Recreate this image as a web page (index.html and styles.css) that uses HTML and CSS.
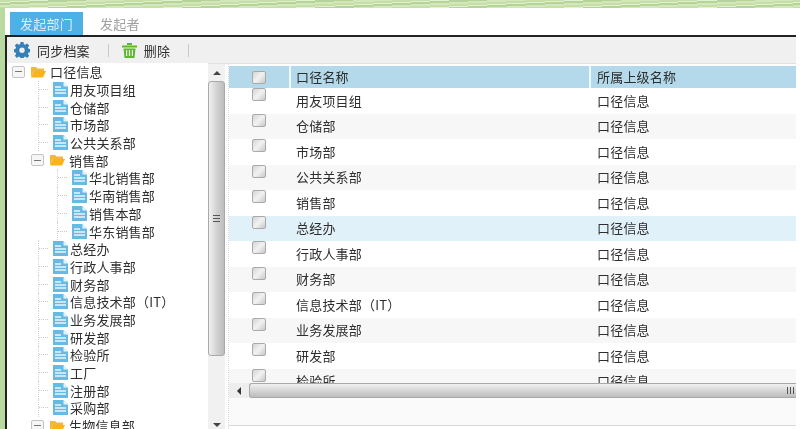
FILE: index.html
```html
<!DOCTYPE html>
<html lang="zh-CN">
<head>
<meta charset="utf-8">
<title>口径信息</title>
<link rel="stylesheet" href="styles.css">
</head>
<body>
<svg class="defs" width="0" height="0" aria-hidden="true">
  <symbol id="doc" viewBox="0 0 15 15">
    <path d="M0 0h10.500L15 4.500V15H0z" fill="#68bae5"/>
    <path d="M10.500 0L15 4.500h-4.500z" fill="#e4f3fb"/>
    <path d="M2 5h6M2 8h11M2 11h11" stroke="#eaf6fd" stroke-width="1.300"/>
  </symbol>
  <symbol id="folder" viewBox="0 0 15 12">
    <path d="M0 1h5l1.500 1.500H13V5H3L0 11z" fill="#f0b840"/>
    <path d="M3 5h12l-3 6.500H0z" fill="#fbb418"/>
  </symbol>
</svg>
<div class="page">
  <div class="tabs">
    <div class="tab active">发起部门</div>
    <div class="tab">发起者</div>
  </div>
  <div class="panel">
    <div class="toolbar">
      <svg class="gear" viewBox="0 0 16 16"><path fill="#3580b8" fill-rule="evenodd" d="M6.500 0h3l.4 2.200 1.300.6L13.100 1.500l2.100 2.100-1.300 1.900.6 1.300 2.200.4v3l-2.200.4-.6 1.300 1.300 1.900-2.100 2.100-1.900-1.300-1.300.6-.4 2.200h-3l-.4-2.200-1.300-.6-1.900 1.300L.8 13.800l1.300-1.900-.6-1.300L0 10.200v-3l1.500-.4.600-1.300L.8 3.600l2.100-2.100 1.900 1.300 1.300-.6zM8 5.500a2.700 2.700 0 1 0 0 5.400 2.700 2.700 0 0 0 0-5.400z"/></svg>
      <span class="tool-label">同步档案</span>
      <span class="tool-sep"></span>
      <svg class="trash" viewBox="0 0 15 15"><path fill="#5cb82e" d="M0 2.500h15V4.500H0zM5 0h5v2H5zM1.500 5.500h12L12.500 15h-10zM4 7v6h1.200V7zm2.900 0v6h1.200V7zm2.900 0v6H11V7z" fill-rule="evenodd"/></svg>
      <span class="tool-label">删除</span>
      <span class="tool-sep"></span>
    </div>
    <div class="body">
      <div class="tree">
        <div class="node root"><span class="exp"></span><svg class="ic-folder"><use href="#folder"/></svg><span>口径信息</span></div>
        <div class="node l1"><i class="guide"></i><svg class="ic-doc"><use href="#doc"/></svg><span>用友项目组</span></div>
        <div class="node l1"><i class="guide"></i><svg class="ic-doc"><use href="#doc"/></svg><span>仓储部</span></div>
        <div class="node l1"><i class="guide"></i><svg class="ic-doc"><use href="#doc"/></svg><span>市场部</span></div>
        <div class="node l1"><i class="guide"></i><svg class="ic-doc"><use href="#doc"/></svg><span>公共关系部</span></div>
        <div class="node branch"><span class="exp"></span><svg class="ic-folder"><use href="#folder"/></svg><span>销售部</span></div>
        <div class="node l2"><i class="guide"></i><svg class="ic-doc"><use href="#doc"/></svg><span>华北销售部</span></div>
        <div class="node l2"><i class="guide"></i><svg class="ic-doc"><use href="#doc"/></svg><span>华南销售部</span></div>
        <div class="node l2"><i class="guide"></i><svg class="ic-doc"><use href="#doc"/></svg><span>销售本部</span></div>
        <div class="node l2"><i class="guide"></i><svg class="ic-doc"><use href="#doc"/></svg><span>华东销售部</span></div>
        <div class="node l1"><i class="guide"></i><svg class="ic-doc"><use href="#doc"/></svg><span>总经办</span></div>
        <div class="node l1"><i class="guide"></i><svg class="ic-doc"><use href="#doc"/></svg><span>行政人事部</span></div>
        <div class="node l1"><i class="guide"></i><svg class="ic-doc"><use href="#doc"/></svg><span>财务部</span></div>
        <div class="node l1"><i class="guide"></i><svg class="ic-doc"><use href="#doc"/></svg><span>信息技术部（IT）</span></div>
        <div class="node l1"><i class="guide"></i><svg class="ic-doc"><use href="#doc"/></svg><span>业务发展部</span></div>
        <div class="node l1"><i class="guide"></i><svg class="ic-doc"><use href="#doc"/></svg><span>研发部</span></div>
        <div class="node l1"><i class="guide"></i><svg class="ic-doc"><use href="#doc"/></svg><span>检验所</span></div>
        <div class="node l1"><i class="guide"></i><svg class="ic-doc"><use href="#doc"/></svg><span>工厂</span></div>
        <div class="node l1"><i class="guide"></i><svg class="ic-doc"><use href="#doc"/></svg><span>注册部</span></div>
        <div class="node l1"><i class="guide"></i><svg class="ic-doc"><use href="#doc"/></svg><span>采购部</span></div>
        <div class="node branch"><span class="exp"></span><svg class="ic-folder"><use href="#folder"/></svg><span>生物信息部</span></div>
      </div>
      <div class="vscroll">
        <div class="arrow-up"></div>
        <div class="vthumb"><span class="vgrip"></span></div>
        <div class="arrow-down"></div>
      </div>
      <div class="grid">
        <div class="head">
          <div class="c-check"><span class="cb"></span></div>
          <div class="c-name">口径名称</div>
          <div class="c-parent">所属上级名称</div>
        </div>
        <div class="rows">
          <div class="row"><div class="c-check"><span class="cb"></span></div><div class="c-name">用友项目组</div><div class="c-parent">口径信息</div></div>
          <div class="row alt"><div class="c-check"><span class="cb"></span></div><div class="c-name">仓储部</div><div class="c-parent">口径信息</div></div>
          <div class="row"><div class="c-check"><span class="cb"></span></div><div class="c-name">市场部</div><div class="c-parent">口径信息</div></div>
          <div class="row alt"><div class="c-check"><span class="cb"></span></div><div class="c-name">公共关系部</div><div class="c-parent">口径信息</div></div>
          <div class="row"><div class="c-check"><span class="cb"></span></div><div class="c-name">销售部</div><div class="c-parent">口径信息</div></div>
          <div class="row hover"><div class="c-check"><span class="cb"></span></div><div class="c-name">总经办</div><div class="c-parent">口径信息</div></div>
          <div class="row"><div class="c-check"><span class="cb"></span></div><div class="c-name">行政人事部</div><div class="c-parent">口径信息</div></div>
          <div class="row alt"><div class="c-check"><span class="cb"></span></div><div class="c-name">财务部</div><div class="c-parent">口径信息</div></div>
          <div class="row"><div class="c-check"><span class="cb"></span></div><div class="c-name">信息技术部（IT）</div><div class="c-parent">口径信息</div></div>
          <div class="row alt"><div class="c-check"><span class="cb"></span></div><div class="c-name">业务发展部</div><div class="c-parent">口径信息</div></div>
          <div class="row"><div class="c-check"><span class="cb"></span></div><div class="c-name">研发部</div><div class="c-parent">口径信息</div></div>
          <div class="row alt"><div class="c-check"><span class="cb"></span></div><div class="c-name">检验所</div><div class="c-parent">口径信息</div></div>
        </div>
        <div class="hscroll">
          <div class="arrow-left"></div>
          <div class="hthumb"><span class="hgrip"></span></div>
        </div>
        <div class="footer"></div>
      </div>
    </div>
  </div>
</div>
</body>
</html>
```
FILE: styles.css
```css
* { box-sizing: border-box; }
html, body { margin: 0; height: 100%; overflow: hidden; }
body {
  font: 13px "Noto Sans CJK SC", "Liberation Sans", sans-serif;
  color: #2e2e2e;
  background:
    repeating-linear-gradient(177deg, #c6dfa8 0 2px, #e2efd0 2px 3px, #b4d596 3px 5px, #d3e6bc 5px 7px) top / 100% 8px no-repeat,
    #b8d9a0;
  padding: 8px 0 0 5px;
}
.defs { position: absolute; }
.page {
  height: 421px;
  background: #fff;
  padding-right: 4px;
  display: flex;
  flex-direction: column;
  filter: blur(.4px);
}
.tabs {
  height: 27px;
  padding: 4px 0 0 5px;
  display: flex;
  flex: none;
}
.tab {
  height: 23px;
  line-height: 23px;
  padding: 0 16px;
  color: #a0a0a0;
  letter-spacing: .2px;
}
.tab.active {
  width: 73px;
  padding: 0;
  margin-right: 1px;
  text-align: center;
  background: #4fb0e6;
  color: #d9eefa;
}
.panel {
  flex: 1;
  min-height: 0;
  border-top: 2px solid #222;
  border-left: 2px solid #222;
  display: flex;
  flex-direction: column;
}
.toolbar {
  flex: none;
  height: 27px;
  background: #f0f0f0;
  border-bottom: 1px solid #e2e0de;
  display: flex;
  align-items: center;
  padding-left: 7px;
}
.gear { width: 16px; height: 16px; margin-right: 7px; }
.trash { width: 15px; height: 15px; margin-right: 7px; }
.tool-label { letter-spacing: .2px; }
.tool-sep { width: 1px; height: 13px; background: #c9c9c9; margin-left: 18px; margin-right: 13px; }
.body { flex: 1; min-height: 0; display: flex; }
.tree {
  width: 201px;
  flex: none;
  background: #fff;
  overflow: hidden;
  margin-top: -1px;
}
.node {
  height: 17.7px;
  display: flex;
  align-items: center;
  white-space: nowrap;
  letter-spacing: .2px;
}
.root { padding-left: 5px; }
.branch { padding-left: 24px; }
.l1 { padding-left: 31px; }
.l2 { padding-left: 50px; }
.exp {
  width: 13px;
  height: 12px;
  flex: none;
  border: 1px solid #c4c4c4;
  border-radius: 2px;
  background: linear-gradient(#777, #777) center / 7px 1px no-repeat, #f6f6f6;
  margin-right: 6px;
}
.ic-folder { width: 15px; height: 12px; flex: none; margin-right: 4px; }
.ic-doc { width: 15px; height: 15px; flex: none; margin-right: 2px; }
.guide {
  width: 15px;
  height: 100%;
  flex: none;
  border-left: 1px dotted #d4d4d4;
  background: repeating-linear-gradient(90deg, #c8c8c8 0 1px, transparent 1px 2px) 0 50% / 9px 1px no-repeat;
}
.vscroll {
  width: 17px;
  flex: none;
  background: #f1f1f1;
  display: flex;
  flex-direction: column;
  align-items: center;
}
.arrow-up {
  flex: none;
  margin: 7px 0 6px;
  border: 4px solid transparent;
  border-top: 0;
  border-bottom: 4px solid #444;
}
.vthumb {
  width: 17px;
  height: 275px;
  flex: none;
  border: 1px solid #a9a9a9;
  border-radius: 3px;
  background: linear-gradient(90deg, #f1f1f1, #d3d3d3 50%, #bdbdbd);
  display: flex;
  align-items: center;
  justify-content: center;
}
.vgrip {
  width: 7px;
  height: 7px;
  background: repeating-linear-gradient(#555 0 1px, transparent 1px 3px);
}
.arrow-down {
  flex: none;
  margin-top: auto;
  margin-bottom: 2px;
  border: 4px solid transparent;
  border-bottom: 0;
  border-top: 4px solid #444;
}
.grid {
  flex: 1;
  min-width: 0;
  margin-left: 3px;
  padding-top: 2px;
  display: flex;
  flex-direction: column;
  border-left: 1px dotted #d8d8d8;
}
.head {
  flex: none;
  height: 22px;
  background: #b3d9ea;
  display: flex;
  align-items: center;
}
.c-check { width: 60px; flex: none; padding-left: 23px; }
.c-name { width: 300px; flex: none; padding-left: 7px; letter-spacing: .2px; }
.c-parent { flex: 1; padding-left: 8px; letter-spacing: .2px; }
.head .c-name { line-height: 22px; border-left: 2px solid #eef7fb; padding-left: 5px; }
.head .c-parent { line-height: 22px; border-left: 2px solid #eef7fb; padding-left: 6px; }
.rows { height: 295px; flex: none; overflow: hidden; }
.row {
  height: 25.5px;
  display: flex;
  align-items: center;
  background: #fff;
}
.row.alt { background: #f7f7f7; }
.row.hover { background: #e1f1f9; }
.row .c-check { align-self: flex-start; }
.row .c-name, .row .c-parent { position: relative; top: -.5px; }
.cb {
  display: block;
  width: 14px;
  height: 13px;
  border: 1px solid #aaa;
  border-radius: 2px;
  background: linear-gradient(135deg, #d4d4d4, #f2f2f2 50%, #c8c8c8);
}
.hscroll {
  flex: none;
  height: 15px;
  background: #eeeeee;
  display: flex;
  align-items: center;
}
.arrow-left {
  flex: none;
  width: 0;
  margin: 0 7px 0 8px;
  border: 4px solid transparent;
  border-left: 0;
  border-right: 4px solid #333;
}
.hthumb {
  flex: 1;
  height: 15px;
  margin-left: 1px;
  border: 1px solid #a9a9a9;
  border-right: 0;
  border-radius: 3px 0 0 3px;
  background: linear-gradient(#f0f0f0, #d6d6d6 50%, #bcbcbc);
  display: flex;
  align-items: center;
  justify-content: flex-end;
  padding-right: 2px;
}
.hgrip {
  width: 7px;
  height: 7px;
  background: repeating-linear-gradient(90deg, #555 0 1px, transparent 1px 3px);
}
.footer {
  flex: 1;
  background: #fafafa;
  border-bottom: 1px solid #d8d8d8;
  margin-bottom: 3px;
}
```
